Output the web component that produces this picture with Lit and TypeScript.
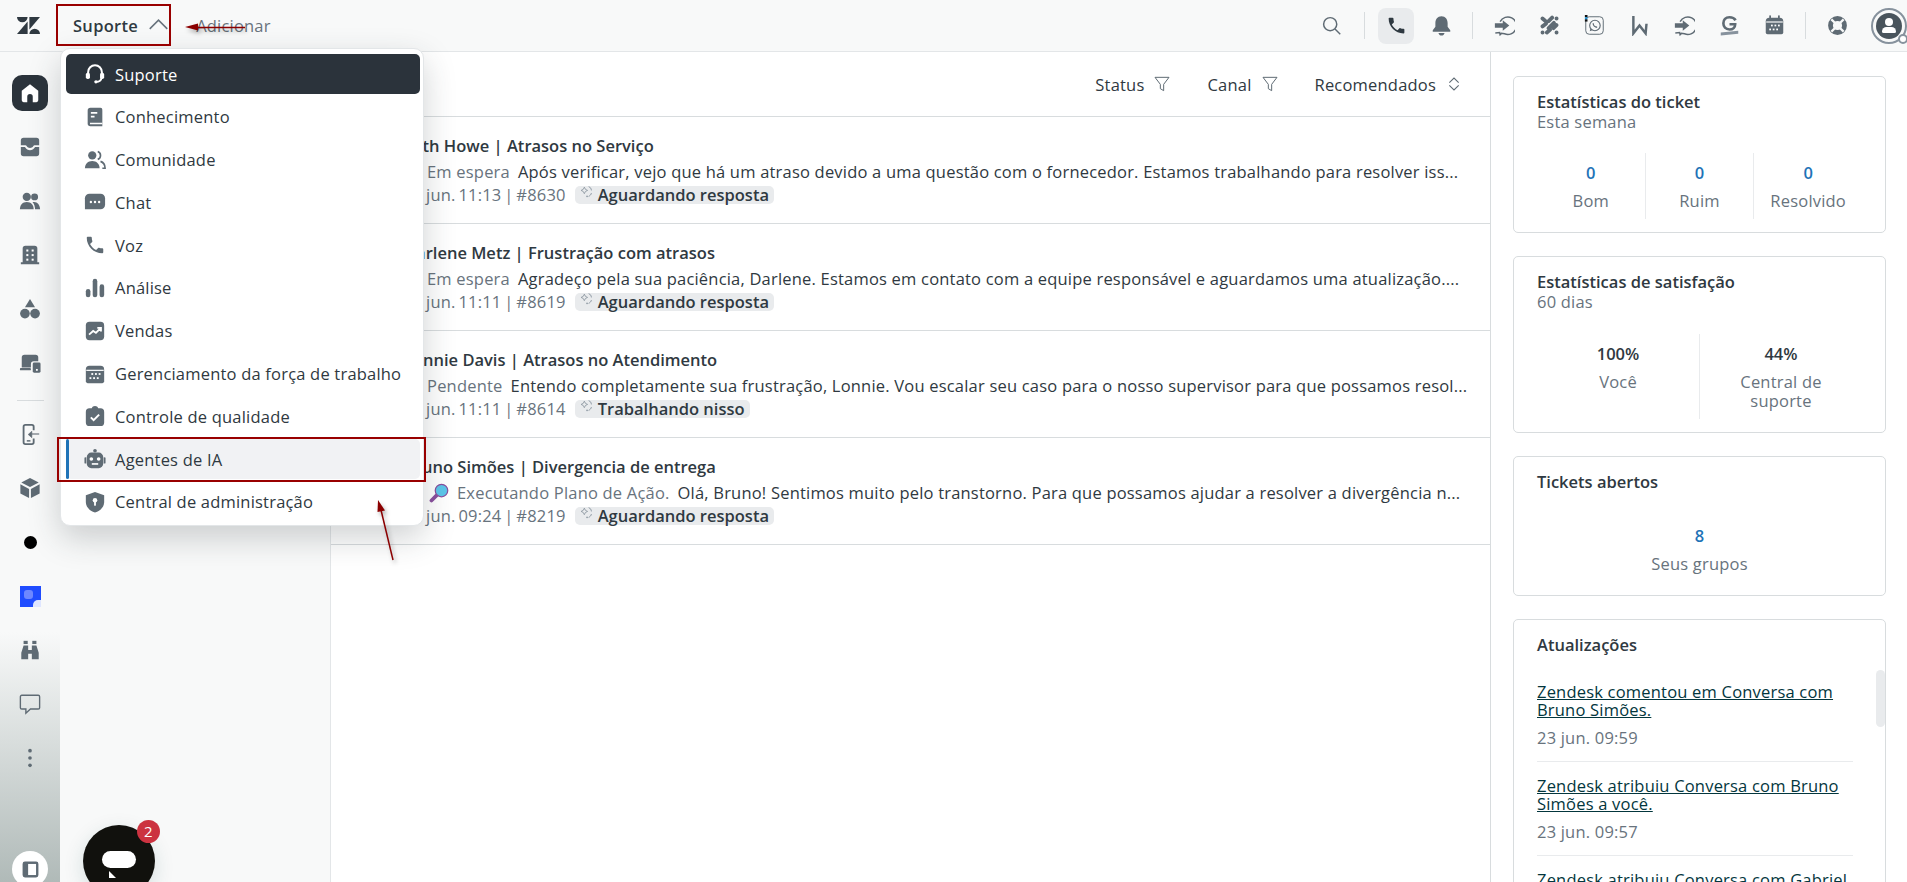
import {LitElement, html, css, svg} from 'lit';
import {customElement} from 'lit/decorators.js';

const icons: Record<string, unknown> = {
  phone: svg`<path d="M6.6 10.8c1.4 2.8 3.8 5.1 6.6 6.6l2.2-2.2c.3-.3.7-.4 1-.2 1.1.4 2.3.6 3.6.6.6 0 1 .4 1 1V20c0 .6-.4 1-1 1C10.6 21 3 13.4 3 4c0-.6.4-1 1-1h3.5c.6 0 1 .4 1 1 0 1.3.2 2.5.6 3.6.1.3 0 .7-.2 1z"/>`,
  headset: svg`<path d="M4.5 12.5V10a7.5 7.5 0 0 1 15 0v2.500M19 16c0 2.600-2.500 4.500-5.500 4.500" fill="none" stroke="currentColor" stroke-width="2.200"/><rect x="2" y="10.500" width="4.500" height="7" rx="2"/><rect x="17.500" y="10.500" width="4.500" height="7" rx="2"/><circle cx="13" cy="20.500" r="1.800"/>`,
  book: svg`<path d="M7 2h11a2 2 0 0 1 2 2v18H7a3 3 0 0 1-3-3V5a3 3 0 0 1 3-3z"/><path d="M7.500 6.500h7v2h-7zM7.500 10.500h4v2h-4zM6.500 18.200h13.500v1.600H6.500z" fill="#fff"/>`,
  people: svg`<circle cx="9" cy="7" r="4.500"/><path d="M1 21c0-5 3.500-8 8-8s8 3 8 8z"/><path d="M15 2.800a4.500 4.500 0 0 1 0 8.500M18 13.500c3 1 5 3.500 5 7.500h-3" fill="none" stroke="currentColor" stroke-width="1.800"/>`,
  peopleFill: svg`<circle cx="8.500" cy="7.500" r="4.500"/><circle cx="17" cy="7.500" r="3.800"/><path d="M1 21c0-5 3-8 7.500-8s7.500 3 7.500 8z"/><path d="M17.500 21c0-3-1-6-2.800-7.600 4.500-1.400 8.300 2.500 8.300 7.600z"/>`,
  chat: svg`<path d="M6 3h12a5 5 0 0 1 5 5v7a5 5 0 0 1-5 5H1V8a5 5 0 0 1 5-5z"/><circle cx="7.500" cy="12" r="1.300" fill="#fff"/><circle cx="12" cy="12" r="1.300" fill="#fff"/><circle cx="16.500" cy="12" r="1.300" fill="#fff"/>`,
  bars: svg`<rect x="2" y="13" width="5" height="9" rx="2.500"/><rect x="9.500" y="2" width="5" height="20" rx="2.500"/><rect x="17" y="8" width="5" height="14" rx="2.500"/>`,
  sales: svg`<rect x="2" y="2" width="20" height="20" rx="4"/><path d="M5.500 16l4.500-4 3 2 5-5M14.500 8.500h4v4" fill="none" stroke="#fff" stroke-width="2"/>`,
  calendar: svg`<path d="M6 3h12a4 4 0 0 1 4 4v13a2 2 0 0 1-2 2H4a2 2 0 0 1-2-2V7a4 4 0 0 1 4-4z"/><path d="M2.500 8h19" stroke="#fff" stroke-width="1.300"/><g fill="#fff"><rect x="8" y="11" width="2" height="2"/><rect x="12" y="11" width="2" height="2"/><rect x="16" y="11" width="2" height="2"/><rect x="6" y="15.500" width="2" height="2"/><rect x="10" y="15.500" width="2" height="2"/><rect x="14" y="15.500" width="2" height="2"/></g>`,
  clipboard: svg`<path d="M6 3.500h2.500C9 1.800 10.300 1 12 1s3 .8 3.500 2.500H18a4 4 0 0 1 4 4V19a4 4 0 0 1-4 4H6a4 4 0 0 1-4-4V7.500a4 4 0 0 1 4-4z"/><path d="M7.500 13.500l3 3 6-6" fill="none" stroke="#fff" stroke-width="2.200"/>`,
  robot: svg`<circle cx="12" cy="3" r="2"/><rect x="3" y="5" width="18" height="17" rx="5"/><rect x="0.500" y="10" width="2" height="7" rx="1"/><rect x="21.500" y="10" width="2" height="7" rx="1"/><circle cx="8" cy="12" r="2" fill="#fff"/><circle cx="16" cy="12" r="2" fill="#fff"/><rect x="8.500" y="16.500" width="7" height="1.800" fill="#fff"/>`,
  shield: svg`<path d="M12 1l10 3.500v7.500c0 5.500-4 9.500-10 11.500C6 21.500 2 17.500 2 12V4.500z"/><circle cx="12" cy="10" r="2.500" fill="#fff"/><rect x="11" y="10" width="2" height="6" fill="#fff"/>`,
  home: svg`<path d="M12 2.500l9 7V20a2 2 0 0 1-2 2h-4v-6a3 3 0 0 0-6 0v6H5a2 2 0 0 1-2-2V9.500z"/>`,
  inbox: svg`<path d="M5 2h14a3 3 0 0 1 3 3v5h-4.500c-1 0-1.500.4-2 1.200-.7 1.200-2 1.800-3.500 1.800s-2.800-.6-3.500-1.800C8 10.400 7.500 10 6.500 10H2V5a3 3 0 0 1 3-3z"/><path d="M2 12h4.500c1.600 2.600 3.300 3.500 5.500 3.500s3.900-.9 5.500-3.500H22v7a3 3 0 0 1-3 3H5a3 3 0 0 1-3-3z"/>`,
  building: svg`<path d="M7 2h10a3 3 0 0 1 3 3v15h2v2H2v-2h2V5a3 3 0 0 1 3-3z"/><g fill="#fff"><rect x="8" y="6" width="2.200" height="2.200"/><rect x="13.800" y="6" width="2.200" height="2.200"/><rect x="8" y="11" width="2.200" height="2.200"/><rect x="13.800" y="11" width="2.200" height="2.200"/><rect x="8" y="16" width="2.200" height="2.200"/><rect x="13.800" y="16" width="2.200" height="2.200"/></g>`,
  shapes: svg`<path d="M12 1l5.500 9h-11z"/><circle cx="6.500" cy="17" r="5.300"/><circle cx="17.500" cy="17" r="5.300"/>`,
  devices: svg`<path d="M6 3h12a3 3 0 0 1 3 3v4h-5a3 3 0 0 0-3 3v4H3V6a3 3 0 0 1 3-3z"/><rect x="1" y="17.500" width="12" height="2.500" rx="1"/><path d="M16.500 11.500H22a1.500 1.500 0 0 1 1.500 1.500v8a1.500 1.500 0 0 1-1.500 1.500h-5.500A1.500 1.500 0 0 1 15 21v-8a1.500 1.500 0 0 1 1.500-1.500z"/><rect x="18.500" y="18.500" width="2" height="2" fill="#fff"/>`,
  phoneExit: svg`<path d="M16 8V4a2 2 0 0 0-2-2H7a2 2 0 0 0-2 2v17a2 2 0 0 0 2 2h7a2 2 0 0 0 2-2v-4" fill="none" stroke="currentColor" stroke-width="2"/><path d="M8.500 19.500h4" stroke="currentColor" stroke-width="1.600"/><path d="M22 11.500h-8M14 12.500V9l-4 3.500 4 3.500v-3.500h8" fill="currentColor" stroke="currentColor" stroke-width=".6"/>`,
  cube: svg`<path d="M12 1l9.500 5L12 11 2.500 6z"/><path d="M1.500 8l9.500 5v10l-9.500-5z"/><path d="M22.500 8L13 13v10l9.500-5z"/>`,
  binoculars: svg`<rect x="5" y="2" width="4.500" height="3.500"/><rect x="14.500" y="2" width="4.500" height="3.500"/><path d="M5 7h5v5h4V7h5l2.500 8v7H14v-6h-4v6H2.500v-7z"/>`,
  bubble: svg`<path d="M3 2.500h18a1.500 1.500 0 0 1 1.500 1.500v12a1.500 1.500 0 0 1-1.500 1.500h-8.500L7.500 22v-4.500H3A1.500 1.500 0 0 1 1.500 16V4A1.500 1.500 0 0 1 3 2.500z" fill="none" stroke="currentColor" stroke-width="1.500"/>`,
  kebab: svg`<circle cx="12" cy="4" r="2"/><circle cx="12" cy="12" r="2"/><circle cx="12" cy="20" r="2"/>`,
  panel: svg`<rect x="2" y="2" width="20" height="20" rx="3"/><rect x="9" y="5" width="10" height="14" fill="#fff"/>`,
  search: svg`<circle cx="10.500" cy="10.500" r="7.500" fill="none" stroke="currentColor" stroke-width="1.700"/><path d="M16 16l6 6" stroke="currentColor" stroke-width="1.700"/>`,
  bell: svg`<path d="M12 1.500c4.500 0 7 3.500 7 8v4l3 4v1.500H2v-1.500l3-4v-4c0-4.500 2.500-8 7-8z"/><path d="M8.500 20.500h7c-.4 1.800-1.800 3-3.500 3s-3.100-1.200-3.500-3z"/>`,
  bridge: svg`<path d="M7 7.500A10 10 0 1 1 12 21.500l-3.500-.5-1.500 1.500-.5-2.500-5 .5" fill="none" stroke="currentColor" stroke-width="1.700"/><path d="M1 9.500h9V6l7.500 6-7.500 6v-3.500H1z"/>`,
  dots: svg`<g stroke="currentColor" stroke-width="4.400" stroke-linecap="round" fill="none"><path d="M4 4l3 2.500M11 7l4-4M20 4h.1M4 13l4-3M11 15l6-6M16.500 15l3.500-3.500M4 20h.1M9 20l3.500-3M20 20h.1"/></g>`,
  whatsapp: svg`<rect x="2" y="2" width="20" height="20" rx="4" fill="none" stroke="currentColor" stroke-width="1.100"/><circle cx="12.500" cy="12" r="6" fill="none" stroke="currentColor" stroke-width="1.300"/><path d="M6.500 18.500l1-3.500 2 2.500z"/><path d="M10.500 9.500c0 2.500 2 4.500 4.500 4.500" fill="none" stroke="currentColor" stroke-width="1.500"/><rect x="1" y="0" width="3" height="2.500" fill="#111"/><rect x="1" y="2.500" width="3" height="2.500" fill="#1f8fd0"/><rect x="1" y="5" width="3" height="2.500" fill="#111"/>`,
  wix: svg`<path d="M5 1v20l7-9 7 9 1-11" fill="none" stroke="currentColor" stroke-width="2.800"/>`,
  grammar: svg`<path d="M19 6C17.500 3.500 15 2.500 12 2.500c-4.500 0-7 3-7 7s2.500 7 7 7c4 0 6.500-2.500 6.500-6H12" fill="none" stroke="currentColor" stroke-width="3"/><path d="M2 20l20-2v3.500L2 23.500z" fill="#87929d"/>`,
  lifebuoy: svg`<circle cx="12" cy="12" r="8" fill="none" stroke="currentColor" stroke-width="5.500"/><g stroke="#f8f9f9" stroke-width="2.600"><path d="M5 5l4.500 4.500M19 5l-4.500 4.500M5 19l4.500-4.500M19 19l-4.500-4.500"/></g>`,
  funnel: svg`<path d="M1.500 2h21L14.500 12.500V22l-5-3v-6.500z" fill="none" stroke="currentColor" stroke-width="1.500" stroke-linejoin="round"/>`,
  sort: svg`<path d="M5 10l7-7 7 7M5 14l7 7 7-7" fill="none" stroke="currentColor" stroke-width="1.600"/>`,
  chevronUp: svg`<path d="M2 17L12 7l10 10" fill="none" stroke="currentColor" stroke-width="1.800"/>`,
  sparkle: svg`<path d="M8 4l2 4 4 2-4 2-2 4-2-4-4-2 4-2z" fill="none" stroke="currentColor" stroke-width="1.500"/><path d="M16 3c3 1 5 4 5 7M21 15c-.5 3-3 5-5 6" fill="none" stroke="currentColor" stroke-width="1.800"/><circle cx="13" cy="21" r="1.500"/>`,
};
icons.calendarTop = svg`<rect x="6" y="0.500" width="2" height="4"/><rect x="16" y="0.500" width="2" height="4"/>${icons.calendar}`;

function icon(name: string, cls = '') {
  return html`<svg class="ic ${cls}" viewBox="0 0 24 24" fill="currentColor" aria-hidden="true">${icons[name]}</svg>`;
}

const railTop = ['home', 'inbox', 'peopleFill', 'building', 'shapes', 'devices'];

const products = [
  {label: 'Suporte', icon: 'headset', state: 'active'},
  {label: 'Conhecimento', icon: 'book'},
  {label: 'Comunidade', icon: 'people'},
  {label: 'Chat', icon: 'chat'},
  {label: 'Voz', icon: 'phone'},
  {label: 'Análise', icon: 'bars'},
  {label: 'Vendas', icon: 'sales'},
  {label: 'Gerenciamento da força de trabalho', icon: 'calendar'},
  {label: 'Controle de qualidade', icon: 'clipboard'},
  {label: 'Agentes de IA', icon: 'robot', state: 'hover'},
  {label: 'Central de administração', icon: 'shield'},
];

const tickets = [
  {
    title: 'Seth Howe | Atrasos no Serviço',
    status: 'Em espera',
    text: 'Após verificar, vejo que há um atraso devido a uma questão com o fornecedor. Estamos trabalhando para resolver iss...',
    date: '23 jun. 11:13 | #8630',
    tag: 'Aguardando resposta',
  },
  {
    title: 'Darlene Metz | Frustração com atrasos',
    status: 'Em espera',
    text: 'Agradeço pela sua paciência, Darlene. Estamos em contato com a equipe responsável e aguardamos uma atualização....',
    date: '23 jun. 11:11 | #8619',
    tag: 'Aguardando resposta',
  },
  {
    title: 'Lonnie Davis | Atrasos no Atendimento',
    status: 'Pendente',
    text: 'Entendo completamente sua frustração, Lonnie. Vou escalar seu caso para o nosso supervisor para que possamos resol...',
    date: '23 jun. 11:11 | #8614',
    tag: 'Trabalhando nisso',
  },
  {
    title: 'Bruno Simões | Divergencia de entrega',
    status: 'Executando Plano de Ação.',
    lens: true,
    text: 'Olá, Bruno! Sentimos muito pelo transtorno. Para que possamos ajudar a resolver a divergência n...',
    date: '23 jun. 09:24 | #8219',
    tag: 'Aguardando resposta',
  },
];

const updates = [
  {text: 'Zendesk comentou em Conversa com Bruno Simões.', date: '23 jun. 09:59'},
  {text: 'Zendesk atribuiu Conversa com Bruno Simões a você.', date: '23 jun. 09:57'},
  {text: 'Zendesk atribuiu Conversa com Gabriel Souza a você.', date: '23 jun. 09:50'},
];

@customElement('app-root')
export class AppRoot extends LitElement {
  static styles = css`
    :host {
      display: block;
      position: relative;
      height: 882px;
      overflow: hidden;
      background: #fff;
      color: #2f3941;
      font: 16.500px/21px "Open Sans", sans-serif;
      letter-spacing: 0.2px;
    }
    .ic { width: 20px; height: 20px; display: block; flex: none; }

    .topbar {
      height: 51px;
      display: flex;
      align-items: center;
      background: #f8f9f9;
      border-bottom: 1px solid #e3e6e8;
      box-sizing: content-box;
    }
    .logo { width: 23px; height: 17px; margin: 0 33px 0 17px; color: #2f3941; flex: none; }
    .brand { display: flex; align-items: center; gap: 10px; font-weight: 600; letter-spacing: 0.3px; }
    .brand .ic { width: 21px; height: 21px; color: #68737d; margin-top: -2px; }
    .add { margin-left: 27px; color: #68737d; }
    .tools { margin-left: auto; display: flex; align-items: center; color: #5f6b74; }
    .tool { width: 36px; height: 36px; display: flex; align-items: center; justify-content: center; margin-right: 9px; }
    .tool.first { margin-right: 11px; }
    .tool.on { background: #e9ebed; border-radius: 8px; color: #2f3941; }
    .tool .ic { width: 21px; height: 21px; }
    .tool-sep { width: 1px; height: 27px; background: #d8dcde; margin: 0 13px 0 4px; }
    .avatar { position: relative; width: 36px; height: 36px; margin: 0 0 0 7px; }
    .ring { position: absolute; inset: 0; border: 2.500px solid #87929d; border-radius: 50%; box-sizing: border-box; }
    .face { position: absolute; inset: 5px; border-radius: 50%; background: #49545c; }
    .face::before { content: ""; position: absolute; left: 9px; top: 5px; width: 8px; height: 8px; border-radius: 50%; background: #fff; }
    .face::after { content: ""; position: absolute; left: 6px; top: 14px; width: 14px; height: 6px; border-radius: 6px 6px 2px 2px; background: #fff; }
    .presence { position: absolute; right: -1px; bottom: 0; width: 10px; height: 10px; border: 2px solid #87929d; border-radius: 50%; background: #fff; box-sizing: border-box; }

    .body { display: flex; height: 830px; }
    .rail {
      width: 60px;
      flex: none;
      display: flex;
      flex-direction: column;
      align-items: center;
      padding-top: 14px;
      box-sizing: border-box;
      color: #5f6b74;
      background: linear-gradient(#f8f9f9 0, #f8f9f9 580px, #b0bab8 830px);
    }
    .rail-item { width: 36px; height: 54px; display: flex; align-items: center; justify-content: center; }
    .rail-item .ic { width: 22px; height: 22px; }
    .rail-item.on::before { content: ""; position: absolute; width: 36px; height: 36px; border-radius: 10px; background: #2b333b; }
    .rail-item.on .ic { position: relative; color: #fff; }
    .rail-sep { width: 27px; height: 1px; background: #d8dcde; margin: 10px 0 6px; }
    .rail-dot { width: 13px; height: 13px; border-radius: 50%; background: #000; }
    .rail-app {
      position: relative;
      width: 21px;
      height: 21px;
      background: #1f4cff;
      overflow: hidden;
    }
    .rail-app::before { content: ""; position: absolute; left: 4px; top: 4px; width: 9px; height: 9px; background: #6d87ff; border-radius: 3px; }
    .rail-app::after { content: ""; position: absolute; right: -1px; bottom: -1px; width: 9px; height: 8px; border-radius: 5px 0 0 0; background: #dfe6ff; }
    .rail-toggle {
      margin-top: auto;
      margin-bottom: -5px;
      width: 36px;
      height: 36px;
      border-radius: 50%;
      background: #fff;
      display: flex;
      align-items: center;
      justify-content: center;
    }
    .rail-toggle .ic { width: 19px; height: 19px; }

    .side { width: 270px; flex: none; background: #f8f9f9; border-right: 1px solid #e3e6e8; }

    .main { flex: 1; min-width: 0; border-right: 1px solid #d8dcde; }
    .filters {
      height: 64px;
      display: flex;
      align-items: center;
      justify-content: flex-end;
      gap: 37px;
      padding-right: 28px;
      color: #2f3941;
    }
    .filter { display: flex; align-items: center; gap: 10px; }
    .filter .ic { width: 16px; height: 16px; color: #5f6b74; }
    .ticket {
      height: 107px;
      box-sizing: border-box;
      border-top: 1px solid #d8dcde;
      padding: 16px 24px 0 76px;
      white-space: nowrap;
      overflow: hidden;
    }
    .ticket:last-child { border-bottom: 1px solid #d8dcde; height: 108px; }
    .t-title { font-weight: 600; line-height: 25px; letter-spacing: 0; margin-left: -3px; }
    .t-line { display: flex; align-items: center; line-height: 25px; margin-top: 1px; }
    .t-mark { width: 20px; flex: none; }
    .lens-ic { width: 20px; height: 20px; display: block; margin: 0 8px 0 2px; flex: none; }
    .t-status { color: #68737d; margin-right: 8px; }
    .t-meta { display: flex; align-items: center; color: #68737d; line-height: 25px; margin: -2px 0 0 -3px; }
    .t-date { word-spacing: -1.700px; }
    .tag {
      display: inline-flex;
      align-items: center;
      margin-left: 9px;
      height: 18px;
      padding: 0 5px;
      border-radius: 5px;
      background: #e9ebed;
      color: #2f3941;
      font-weight: 600;
      letter-spacing: 0;
    }
    .tag .ic { width: 13px; height: 13px; color: #87929d; margin: -6px 5px 0 0; }

    .stats { width: 416px; flex: none; padding: 24px 21px 0 22px; box-sizing: border-box; }
    .card {
      border: 1px solid #d8dcde;
      border-radius: 5px;
      padding: 14px 23px;
      margin-bottom: 23px;
      box-sizing: border-box;
    }
    .c1 { height: 157px; }
    .c2 { height: 177px; }
    .c3 { height: 140px; }
    .c4 { position: relative; height: 400px; }
    .c-title { font-weight: 600; line-height: 21px; letter-spacing: 0; }
    .c-sub { color: #68737d; line-height: 20px; }
    .cols { display: flex; margin-top: 21px; }
    .c2 .cols { margin-top: 22px; }
    .c3 .cols { margin-top: 24px; }
    .col {
      flex: 1 1 0;
      min-width: 0;
      padding: 9px 20px 0;
      box-sizing: border-box;
      text-align: center;
      color: #68737d;
      border-left: 1px solid #e9ebed;
    }
    .c1 .col { height: 66px; padding: 9px 4px 0; }
    .c2 .col { height: 85px; }
    .col:first-child { border-left: 0; }
    .num { font-weight: 600; color: #1f73b7; line-height: 21px; margin-bottom: 8px; letter-spacing: 0; }
    .num.dark { color: #2f3941; }
    .col-label { line-height: 19px; }
    .updates { margin-top: 28px; width: 316px; }
    .update { padding-bottom: 13px; margin-bottom: 15px; border-bottom: 1px solid #e9ebed; }
    .update a { color: #03363d; text-decoration: underline; display: block; line-height: 18px; }
    .update div { color: #68737d; margin-top: 9px; line-height: 20px; }
    .scroll { position: absolute; right: 0; top: 50px; width: 9px; height: 57px; border-radius: 5px; background: #e9ebed; }

    .menu {
      position: absolute;
      left: 60px;
      top: 48px;
      width: 364px;
      height: 478px;
      box-sizing: border-box;
      padding: 5px 3px 5px 5px;
      display: flex;
      flex-direction: column;
      gap: 2.800px;
      background: #fff;
      border: 1px solid #e3e6e8;
      border-radius: 10px;
      box-shadow: 0 12px 32px rgba(40, 50, 55, 0.22);
    }
    .item {
      position: relative;
      flex: none;
      height: 40px;
      display: flex;
      align-items: center;
      gap: 9px;
      padding: 0 0 0 18px;
      border-radius: 5px;
      color: #2f3941;
    }
    .item .ic { width: 22px; height: 22px; color: #5f6b74; }
    .item.active { background: #2b333b; color: #fff; }
    .item.active .ic { color: #fff; }
    .item.hover { background: #f1f2f4; }
    .item.hover::before {
      content: "";
      position: absolute;
      left: 0;
      top: 0;
      bottom: 0;
      width: 3px;
      border-radius: 3px;
      background: #1f73b7;
    }

    .mark { position: absolute; border: 2px solid #990000; box-sizing: border-box; pointer-events: none; }
    .mark.m1 { left: 56px; top: 4px; width: 115px; height: 42px; }
    .mark.m2 { left: 57px; top: 437px; width: 369px; height: 45px; }
    .arrows {
      position: absolute;
      left: 0;
      top: 0;
      width: 1907px;
      height: 882px;
      pointer-events: none;
      filter: drop-shadow(2px 3px 2px rgba(0, 0, 0, 0.3));
    }

    .launcher {
      position: absolute;
      left: 83px;
      top: 825px;
      width: 72px;
      height: 72px;
      border-radius: 50%;
      background: #11110d;
      box-shadow: 0 6px 20px rgba(23, 73, 77, 0.15);
    }
    .launcher::before { content: ""; position: absolute; left: 19px; top: 26px; width: 34px; height: 17px; border-radius: 9px; background: #fff; }
    .launcher::after { content: ""; position: absolute; left: 26px; top: 46px; border-left: 7px solid #fff; border-top: 7px solid transparent; }
    .badge {
      position: absolute;
      left: 137px;
      top: 820px;
      width: 23px;
      height: 23px;
      border-radius: 50%;
      background: #cc3340;
      color: #fff;
      text-align: center;
      font-size: 15px;
      line-height: 23px;
    }
  `;

  private renderTicket(t: (typeof tickets)[number]) {
    return html`
      <div class="ticket">
        <div class="t-title">${t.title}</div>
        <div class="t-line">
          <span class="t-mark"></span>
          ${t.lens
            ? html`<svg class="lens-ic" viewBox="0 0 24 24" aria-hidden="true">
                <path d="M3 21l7-7" stroke="#8a4f9e" stroke-width="4.500" stroke-linecap="round"/>
                <circle cx="15" cy="9" r="7.500" fill="#5cc6ea" stroke="#8a4f9e" stroke-width="1.500"/>
              </svg>`
            : ''}
          <span class="t-status">${t.status}</span>
          <span>${t.text}</span>
        </div>
        <div class="t-meta">
          <span class="t-date">${t.date}</span>
          <span class="tag">${icon('sparkle')}${t.tag}</span>
        </div>
      </div>
    `;
  }

  override render() {
    return html`
      <header class="topbar">
        <svg class="logo" viewBox="0 0 23 17" fill="currentColor" aria-label="Zendesk">
          <path d="M10.600 4.500V17H0z"/><path d="M10.600 0a5.300 5.300 0 0 1-10.600 0z"/>
          <path d="M12.400 12.500V0H23z"/><path d="M12.400 17a5.300 5.300 0 0 1 10.600 0z"/>
        </svg>
        <div class="brand">Suporte ${icon('chevronUp')}</div>
        <div class="add">Adicionar</div>
        <div class="tools">
          <div class="tool first">${icon('search')}</div>
          <div class="tool-sep"></div>
          <div class="tool on">${icon('phone')}</div>
          <div class="tool">${icon('bell')}</div>
          <div class="tool-sep"></div>
          <div class="tool">${icon('bridge')}</div>
          <div class="tool">${icon('dots')}</div>
          <div class="tool">${icon('whatsapp')}</div>
          <div class="tool">${icon('wix')}</div>
          <div class="tool">${icon('bridge')}</div>
          <div class="tool">${icon('grammar')}</div>
          <div class="tool">${icon('calendarTop')}</div>
          <div class="tool-sep"></div>
          <div class="tool">${icon('lifebuoy')}</div>
          <div class="avatar">
            <span class="ring"></span><span class="face"></span><span class="presence"></span>
          </div>
        </div>
      </header>

      <div class="body">
        <nav class="rail">
          ${railTop.map((name, i) => html`<div class="rail-item ${i === 0 ? 'on' : ''}">${icon(name)}</div>`)}
          <div class="rail-sep"></div>
          <div class="rail-item">${icon('phoneExit')}</div>
          <div class="rail-item">${icon('cube')}</div>
          <div class="rail-item"><span class="rail-dot"></span></div>
          <div class="rail-item"><span class="rail-app"></span></div>
          <div class="rail-item">${icon('binoculars')}</div>
          <div class="rail-item">${icon('bubble')}</div>
          <div class="rail-item">${icon('kebab')}</div>
          <div class="rail-toggle">${icon('panel')}</div>
        </nav>
        <aside class="side"></aside>
        <main class="main">
          <div class="filters">
            <div class="filter">Status ${icon('funnel')}</div>
            <div class="filter">Canal ${icon('funnel')}</div>
            <div class="filter">Recomendados ${icon('sort')}</div>
          </div>
          ${tickets.map((t) => this.renderTicket(t))}
        </main>
        <section class="stats">
          <div class="card c1">
            <div class="c-title">Estatísticas do ticket</div>
            <div class="c-sub">Esta semana</div>
            <div class="cols">
              <div class="col"><div class="num">0</div><div class="col-label">Bom</div></div>
              <div class="col"><div class="num">0</div><div class="col-label">Ruim</div></div>
              <div class="col"><div class="num">0</div><div class="col-label">Resolvido</div></div>
            </div>
          </div>
          <div class="card c2">
            <div class="c-title">Estatísticas de satisfação</div>
            <div class="c-sub">60 dias</div>
            <div class="cols">
              <div class="col"><div class="num dark">100%</div><div class="col-label">Você</div></div>
              <div class="col"><div class="num dark">44%</div><div class="col-label">Central de suporte</div></div>
            </div>
          </div>
          <div class="card c3">
            <div class="c-title">Tickets abertos</div>
            <div class="cols">
              <div class="col"><div class="num">8</div><div class="col-label">Seus grupos</div></div>
            </div>
          </div>
          <div class="card c4">
            <div class="c-title">Atualizações</div>
            <div class="updates">
              ${updates.map((u) => html`<div class="update"><a>${u.text}</a><div>${u.date}</div></div>`)}
            </div>
            <span class="scroll"></span>
          </div>
        </section>
      </div>

      <div class="menu">
        ${products.map(
          (p) => html`<div class="item ${p.state ?? ''}">${icon(p.icon)}<span>${p.label}</span></div>`,
        )}
      </div>

      <div class="launcher"></div>
      <div class="badge">2</div>

      <div class="mark m1"></div>
      <div class="mark m2"></div>
      <svg class="arrows" viewBox="0 0 1907 882" aria-hidden="true">
        <g fill="#8b0000" stroke="#8b0000">
          <path d="M245 27.500L196 27.500" stroke-width="1.500"/>
          <path d="M185 27l13-3.500v7z" stroke="none"/>
          <path d="M393 560L381 510" stroke-width="1.500"/>
          <path d="M378 500l7 10.500-7.500 1.500z" stroke="none"/>
        </g>
      </svg>
    `;
  }
}
